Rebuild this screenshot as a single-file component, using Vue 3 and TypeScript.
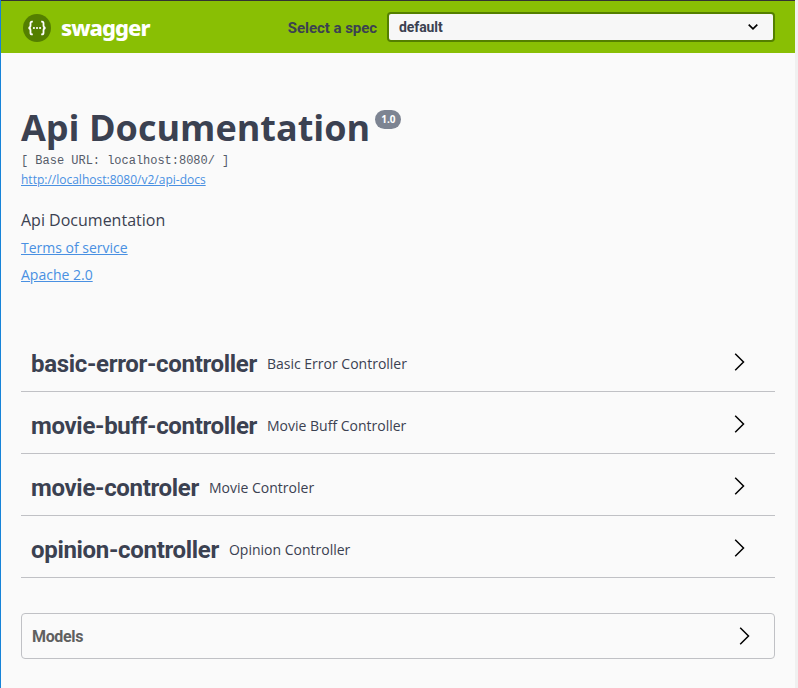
<script setup lang="ts">
interface Tag {
  name: string
  description: string
}

const tags: Tag[] = [
  { name: 'basic-error-controller', description: 'Basic Error Controller' },
  { name: 'movie-buff-controller', description: 'Movie Buff Controller' },
  { name: 'movie-controler', description: 'Movie Controler' },
  { name: 'opinion-controller', description: 'Opinion Controller' },
]
</script>

<template>
  <div class="page">
    <header class="topbar">
      <a class="brand">
        <svg class="logo" viewBox="0 0 28 28" width="28" height="28">
          <circle cx="14" cy="14" r="14" fill="#547f00" />
          <g fill="none" stroke="#fff" stroke-width="1.8">
            <path d="M9.8 7.6H9q-1.5 0-1.5 1.7v2.3q0 2.2-2 2.4q2 .2 2 2.4v2.3q0 1.7 1.5 1.7h.8" />
            <path d="M18.2 7.6h.8q1.5 0 1.5 1.7v2.3q0 2.2 2 2.4q-2 .2-2 2.4v2.3q0 1.7-1.5 1.7h-.8" />
          </g>
          <g fill="#fff">
            <circle cx="10.9" cy="14" r="1.1" />
            <circle cx="14" cy="14" r="1.1" />
            <circle cx="17.1" cy="14" r="1.1" />
          </g>
        </svg>
        <span class="brand-name">swagger</span>
      </a>
      <div class="spec">
        <span class="spec-label">Select a spec</span>
        <div class="select">
          <span>default</span>
          <svg width="12" height="8" viewBox="0 0 12 8">
            <path d="M1.7 1.7 6 5.8l4.3-4.1" fill="none" stroke="#000" stroke-width="1.7" />
          </svg>
        </div>
      </div>
    </header>

    <main class="content">
      <section class="info">
        <h1 class="title"><span>Api Documentation</span><small class="version">1.0</small></h1>
        <pre class="base-url">[ Base URL: localhost:8080/ ]</pre>
        <a class="link docs">http://localhost:8080/v2/api-docs</a>
        <p class="description">Api Documentation</p>
        <a class="link">Terms of service</a>
        <a class="link">Apache 2.0</a>
      </section>

      <section class="tags">
        <div v-for="tag in tags" :key="tag.name" class="tag">
          <h4 class="tag-name">{{ tag.name }}</h4>
          <span class="tag-description">{{ tag.description }}</span>
          <svg class="chevron" width="20" height="20" viewBox="0 0 20 20">
            <path d="M5.2 1.7 13.5 10l-8.3 8.3" fill="none" stroke="#000" stroke-width="1.5" />
          </svg>
        </div>
      </section>

      <section class="models">
        <h4 class="models-name">Models</h4>
        <svg class="chevron" width="20" height="20" viewBox="0 0 20 20">
          <path d="M5.2 1.7 13.5 10l-8.3 8.3" fill="none" stroke="#000" stroke-width="1.5" />
        </svg>
      </section>
    </main>
  </div>
</template>

<style>
body {
  overflow: hidden;
}
</style>

<style scoped>
.page {
  box-sizing: border-box;
  width: 798px;
  height: 688px;
  border-left: 1px solid #1683d8;
  border-right: 3px solid #f0f0f0;
  background: #fafafa;
  color: #3b4151;
  font-family: "Open Sans", sans-serif;
}
.topbar {
  box-sizing: border-box;
  height: 53px;
  border-top: 1px solid #333;
  padding: 1px 20px 0 22px;
  background: #89bf04;
  display: flex;
  align-items: center;
  justify-content: space-between;
  font-family: Roboto, sans-serif;
  font-weight: 700;
}
.brand {
  display: flex;
  align-items: center;
  gap: 10px;
  color: #fff;
}
.logo {
  display: block;
}
.brand-name {
  padding-bottom: 2px;
  font-family: "Noto Sans", sans-serif;
  font-size: 22px;
  line-height: 28px;
  font-weight: 800;
  letter-spacing: -1px;
}
.spec {
  display: flex;
  align-items: center;
  gap: 10px;
  margin-top: -1px;
}
.spec-label {
  padding-top: 2px;
  font-size: 15px;
  line-height: 20px;
  letter-spacing: -0.05px;
}
.select {
  box-sizing: border-box;
  width: 388px;
  height: 30px;
  border: 2px solid #547f00;
  border-radius: 4px;
  padding: 0 14px 0 10px;
  background: #f7f7f7;
  display: flex;
  align-items: center;
  justify-content: space-between;
  font-size: 14px;
  letter-spacing: -0.1px;
}
.content {
  padding: 53px 20px 0;
}
.info {
  display: flex;
  flex-direction: column;
  align-items: flex-start;
  height: 224px;
}
.title {
  margin: 0;
  display: flex;
  align-items: flex-start;
  gap: 5px;
  font-size: 36px;
  line-height: 44px;
  font-weight: 700;
}
.version {
  margin-top: 4px;
  border-radius: 10px;
  padding: 0 5px 0 6px;
  background: #7d8492;
  color: #fff;
  font-size: 10px;
  line-height: 19px;
}
.base-url {
  margin: 4px 0 0;
  color: #555b69;
  font-family: "Liberation Mono", monospace;
  font-size: 12px;
  line-height: 14px;
  letter-spacing: -0.02px;
}
.link {
  color: #4990e2;
  font-size: 14px;
  line-height: 27px;
  text-decoration: underline;
}
.docs {
  margin-top: 3px;
  font-size: 12px;
  line-height: 17px;
}
.description {
  margin: 21px 0 2px;
  font-size: 16px;
  line-height: 23px;
}
.tag {
  box-sizing: border-box;
  height: 62px;
  border-bottom: 1px solid #c0c1c5;
  padding: 7px 25px 0 10px;
  display: flex;
  align-items: center;
  gap: 10px;
}
.tag-name {
  margin: 0;
  font-family: Roboto, sans-serif;
  font-size: 24px;
  line-height: 30px;
  font-weight: 700;
  letter-spacing: -0.32px;
}
.tag-description {
  flex: 1;
  padding-bottom: 2px;
  font-size: 14px;
}
.chevron {
  display: block;
  flex: none;
}
.tag .chevron {
  margin-bottom: 4px;
}
.models {
  box-sizing: border-box;
  height: 46px;
  margin-top: 35px;
  border: 1px solid #c0c1c5;
  border-radius: 4px;
  padding: 0 19px 0 10px;
  display: flex;
  align-items: center;
  justify-content: space-between;
}
.models-name {
  margin: 0;
  color: #606060;
  font-family: Roboto, sans-serif;
  font-size: 16px;
  font-weight: 700;
  letter-spacing: -0.35px;
}
</style>
